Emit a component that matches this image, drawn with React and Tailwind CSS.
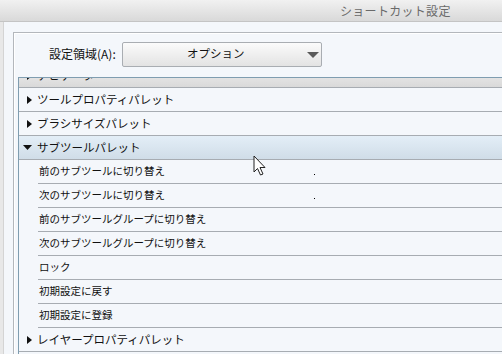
import React from 'react';

const font = { fontFamily: '"MS UI Gothic", "Noto Sans CJK JP", "Noto Sans", sans-serif' };

const RightTri = () => (
  <svg width="6" height="8" viewBox="0 0 6 8" className="shrink-0">
    <path d="M0 0 L5 4 L0 8 Z" fill="#111" />
  </svg>
);

const DownTri = () => (
  <svg width="9" height="6" viewBox="0 0 9 6" className="shrink-0">
    <path d="M0 0 L9 0 L4.5 5 Z" fill="#111" />
  </svg>
);

const ParentRow = ({ label, open, header }) => (
  <div
    className={
      'h-[24px] flex items-center border-b border-[#a7acb2] ' +
      (open ? 'bg-gradient-to-b from-[#e3eef7] to-[#d0dde8] pl-[4px] gap-[5px]' : header ? 'bg-gradient-to-b from-[#f2f2f2] to-[#d9d9d9] pl-[8px] gap-[4px]' : 'pl-[8px] gap-[4px]')
    }
  >
    {open ? <DownTri /> : <RightTri />}
    <span className="text-[11.5px] text-[#111] leading-none whitespace-nowrap">{label}</span>
  </div>
);

const ChildRow = ({ label, dot }) => (
  <div className="h-[24px] flex items-center ml-[19px] border-b border-[#a7acb2]">
    <span className="w-[276px] text-[10.5px] text-[#111] leading-none whitespace-nowrap pl-[1px]">{label}</span>
    {dot && <span className="w-px h-px bg-black mt-[6px]" />}
  </div>
);

export default function App() {
  const children = [
    ['前のサブツールに切り替え', true],
    ['次のサブツールに切り替え', true],
    ['前のサブツールグループに切り替え'],
    ['次のサブツールグループに切り替え'],
    ['ロック'],
    ['初期設定に戻す'],
    ['初期設定に登録'],
  ];

  return (
    <div className="w-[502px] h-[354px] overflow-hidden bg-[#f4f7fb] flex flex-col relative" style={font}>
      {/* title bar */}
      <div className="h-[22px] shrink-0 bg-gradient-to-b from-[#f1f1f1] to-[#d9d9d9] border-b border-[#c4c4c4] flex items-center pl-[340px]">
        <span className="text-[12px] text-[#6a6a6a] tracking-[0.3px] leading-none whitespace-nowrap">ショートカット設定</span>
      </div>

      <div className="flex flex-1 min-h-0">
        {/* left window strip */}
        <div className="w-[4px] shrink-0 bg-[#e8e8e8] border-r border-[#d4d4d4]" />

        <div className="flex-1 pl-[9px] pt-[10px] min-w-0">
          <div className="h-full border-l border-t border-[#b3b7bc] shadow-[inset_1px_1px_0_#ffffff] flex flex-col">
            {/* area selector */}
            <div className="h-[44px] shrink-0 flex items-center pl-[35px] pb-[2px]">
              <span className="text-[12px] text-[#111] leading-none whitespace-nowrap">設定領域(A):</span>
              <div className="ml-[6px] w-[200px] h-[25px] rounded-[2px] border border-[#a9adb2] bg-gradient-to-b from-[#fbfbfb] to-[#e3e3e3] flex items-center relative">
                <span className="flex-1 text-center text-[11.5px] text-[#111] leading-none pr-[12px]">オプション</span>
                <svg width="12" height="7" viewBox="0 0 12 7" className="absolute right-[2px] top-[9px]">
                  <path d="M0 0 L12 0 L6 6 Z" fill="#5a5a5a" />
                </svg>
              </div>
            </div>

            {/* shortcut list */}
            <div className="flex-1 ml-[4px] border-l border-t border-[#7f9db0] overflow-hidden">
              <div className="-mt-[14px]">
                <ParentRow label="ナビゲーター" header />
                <ParentRow label="ツールプロパティパレット" />
                <ParentRow label="ブラシサイズパレット" />
                <ParentRow label="サブツールパレット" open />
                {children.map(([l, d]) => (
                  <ChildRow key={l} label={l} dot={d} />
                ))}
                <ParentRow label="レイヤープロパティパレット" />
              </div>
            </div>
          </div>
        </div>
      </div>

      {/* mouse cursor */}
      <svg width="14" height="22" viewBox="0 0 14 22" className="absolute left-[253px] top-[155px]">
        <path d="M1 1 L1 17 L4.5 13.5 L7.5 20 L10 19 L7 12.5 L12 12.5 Z" fill="#fff" stroke="#222" strokeWidth="1" strokeLinejoin="round" />
      </svg>
    </div>
  );
}
